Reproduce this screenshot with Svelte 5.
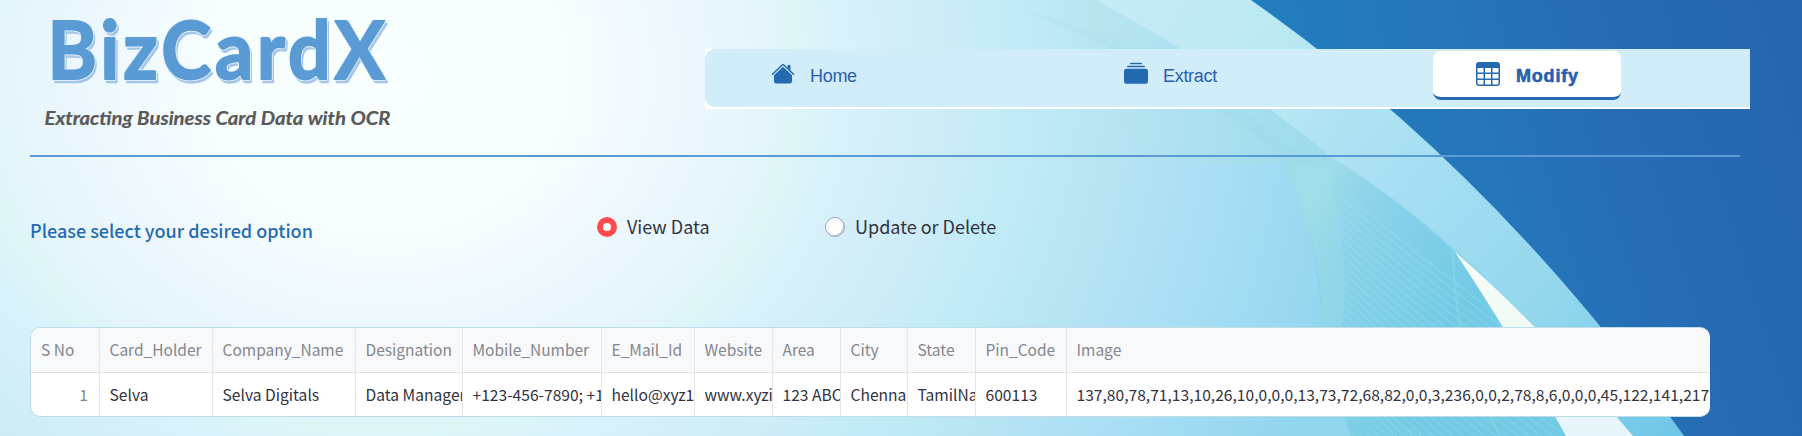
<script>
  const columns = [
    { name: 'S No', value: '1', width: 69, index: true },
    { name: 'Card_Holder', value: 'Selva', width: 113 },
    { name: 'Company_Name', value: 'Selva Digitals', width: 143 },
    { name: 'Designation', value: 'Data Manager', width: 107 },
    { name: 'Mobile_Number', value: '+123-456-7890; +1', width: 139 },
    { name: 'E_Mail_Id', value: 'hello@xyz1', width: 93 },
    { name: 'Website', value: 'www.xyzi', width: 78 },
    { name: 'Area', value: '123 ABC', width: 68 },
    { name: 'City', value: 'Chennai', width: 67 },
    { name: 'State', value: 'TamilNa', width: 68 },
    { name: 'Pin_Code', value: '600113', width: 91 },
    { name: 'Image', value: '137,80,78,71,13,10,26,10,0,0,0,13,73,72,68,82,0,0,3,236,0,0,2,78,8,6,0,0,0,45,122,141,217', width: 642 }
  ];
  const template = columns.map((c) => c.width + 'px').join(' ');
  const strands = Array.from({ length: 40 }, (_, i) => i);
  const fan = Array.from({ length: 16 }, (_, i) => i);
</script>

<div class="page">
  <svg class="backdrop" width="1802" height="436" viewBox="0 0 1802 436" aria-hidden="true">
    <defs>
      <radialGradient id="glow" gradientUnits="userSpaceOnUse" cx="0" cy="0" r="1000" gradientTransform="translate(385 75) scale(1 .86)">
        <stop offset="0" stop-color="#f8fffe" />
        <stop offset=".15" stop-color="#f7fffe" />
        <stop offset=".25" stop-color="#f1faff" />
        <stop offset=".35" stop-color="#e7f6fc" />
        <stop offset=".39" stop-color="#e3f5f9" />
        <stop offset=".42" stop-color="#dcf5f6" />
        <stop offset=".45" stop-color="#d9f1fb" />
        <stop offset=".57" stop-color="#ccecf7" />
        <stop offset=".64" stop-color="#c0ebf7" />
        <stop offset=".72" stop-color="#b7e5f1" />
        <stop offset=".78" stop-color="#b1e1f5" />
        <stop offset=".87" stop-color="#a4ddf2" />
        <stop offset=".96" stop-color="#98d7f0" />
        <stop offset="1" stop-color="#91d5ef" />
      </radialGradient>
      <linearGradient id="deep" gradientUnits="userSpaceOnUse" x1="1340" y1="200" x2="1790" y2="60">
        <stop offset="0" stop-color="#227dbd" />
        <stop offset=".35" stop-color="#2575b9" />
        <stop offset=".6" stop-color="#276cb4" />
        <stop offset="1" stop-color="#2566af" />
      </linearGradient>
      <linearGradient id="ribbon" gradientUnits="userSpaceOnUse" x1="1120" y1="0" x2="1660" y2="436">
        <stop offset="0" stop-color="#c6e9f6" />
        <stop offset=".2" stop-color="#bbe9f2" />
        <stop offset=".5" stop-color="#a5def3" />
        <stop offset=".75" stop-color="#94d7ed" />
        <stop offset="1" stop-color="#70c8e8" />
      </linearGradient>
      <linearGradient id="veil" x1="0" y1="0" x2="1" y2="0">
        <stop offset="0" stop-color="#b2e5e6" stop-opacity="0" />
        <stop offset=".4" stop-color="#b2e5e6" stop-opacity=".55" />
        <stop offset="1" stop-color="#9fdde4" stop-opacity=".8" />
      </linearGradient>
      <linearGradient id="mesh" gradientUnits="userSpaceOnUse" x1="1290" y1="230" x2="1450" y2="330">
        <stop offset="0" stop-color="#9edde8" />
        <stop offset=".3" stop-color="#8cd2eb" />
        <stop offset="1" stop-color="#73cae5" />
      </linearGradient>
      <linearGradient id="shard" x1="0" y1="0" x2="0" y2="1">
        <stop offset="0" stop-color="#f8fff8" />
        <stop offset=".5" stop-color="#f1f9f5" />
        <stop offset="1" stop-color="#e5f5fa" />
      </linearGradient>
      <clipPath id="meshClip"><path d="M1284 158 L1340 162 Q1405 205 1455 252 Q1495 312 1566 436 L1351 436 Q1328 380 1322 325 Q1316 240 1284 158Z" /></clipPath>
    </defs>
    <rect width="1802" height="436" fill="url(#glow)" />
    <path d="M1010 0 H1100 Q1220 65 1340 163 H1284 Q1200 170 1140 150 Q1080 60 1010 0Z" fill="url(#veil)" opacity=".5" />
    <path d="M1095 0 H1250 Q1497 172 1684 436 H1632 Q1482 250 1335 160 Q1220 65 1095 0Z" fill="url(#ribbon)" />
    <path d="M1284 158 L1340 162 Q1405 205 1455 252 Q1495 312 1566 436 L1351 436 Q1328 380 1322 325 Q1316 240 1284 158Z" fill="url(#mesh)" />
    <g clip-path="url(#meshClip)" fill="none" stroke="#aae5ee" stroke-width="1" opacity=".42">
      {#each strands as i}
        <path d="M{1270 + i * 1.2} {120 + i * 9} Q{1350 + i} {210 + i * 9} 1560 {360 + i * 9}" />
      {/each}
      {#each fan as i}
        <path d="M{1286 + i * 2.5} 155 Q{1322 + i * 2} {230 + i * 2} {1323 + i * 1.2} 325 T{1354 + i * 5} 440" stroke="#a9e7e1" stroke-width=".8" />
      {/each}
      <path d="M1453 252 Q1454 350 1500 436" stroke="#a9e7e1" stroke-width="2" opacity=".6" />
    </g>
    <g fill="none" stroke="#8fd3df" stroke-width=".7" opacity=".2">
      {#each fan as i}
        <path d="M{1020 + i * 12} {10 + i * 3} Q{1190 + i * 4} {70 + i * 4} {1288 + i * 2} 164" />
      {/each}
    </g>
    <path d="M1455 252 Q1540 325 1633 436 H1566 Q1515 342 1455 252Z" fill="url(#shard)" />
    <path d="M1251 0 H1802 V436 H1684 Q1496 172 1251 0Z" fill="url(#deep)" />
  </svg>

  <header>
    <div class="brand">
      <svg width="400" height="140" viewBox="0 0 400 140" role="img" aria-label="BizCardX">
        <g class="title" transform="scale(.94 1)">
          <text class="shade" x="52.5" y="82" textLength="359" lengthAdjust="spacing">BizCardX</text>
          <text class="rim" x="50.500" y="79.5" textLength="359" lengthAdjust="spacing">BizCardX</text>
          <text class="face" x="50.500" y="79.5" textLength="359" lengthAdjust="spacing">BizCardX</text>
        </g>
        <text class="tagline" x="44.5" y="124.500" textLength="346" lengthAdjust="spacingAndGlyphs">Extracting Business Card Data with OCR</text>
      </svg>
    </div>
    <nav>
      <div class="tabs">
        <a class="tab">
          <svg width="24" height="23" viewBox="0 0 16 16" preserveAspectRatio="none"><path d="m8 3.293 6 6V13.500a1.500 1.500 0 0 1-1.500 1.500h-9A1.500 1.500 0 0 1 2 13.500V9.293l6-6zm5-.793V6l-2-2V2.500a.5.5 0 0 1 .5-.5h1a.5.5 0 0 1 .5.500z" /><path d="M7.293 1.500a1 1 0 0 1 1.414 0l6.647 6.646a.5.5 0 0 1-.708.708L8 2.207 1.354 8.854a.5.5 0 1 1-.708-.708L7.293 1.500z" /></svg>
          <span>Home</span>
        </a>
        <a class="tab">
          <svg width="24" height="24" viewBox="0 0 16 16"><path d="M0 13a1.500 1.500 0 0 0 1.500 1.500h13A1.500 1.500 0 0 0 16 13V6a1.500 1.500 0 0 0-1.500-1.500h-13A1.500 1.500 0 0 0 0 6v7zM2 3a.5.5 0 0 0 .5.5h11a.5.5 0 0 0 0-1h-11A.5.5 0 0 0 2 3zm2-2a.5.5 0 0 0 .5.5h7a.5.5 0 0 0 0-1h-7A.5.5 0 0 0 4 1z" /></svg>
          <span>Extract</span>
        </a>
        <a class="tab active">
          <svg width="24" height="24" viewBox="0 0 16 16"><path d="M0 2a2 2 0 0 1 2-2h12a2 2 0 0 1 2 2v12a2 2 0 0 1-2 2H2a2 2 0 0 1-2-2V2zm15 2h-4v3h4V4zm0 4h-4v3h4V8zm0 4h-4v3h3a1 1 0 0 0 1-1v-2zm-5 3v-3H6v3h4zm-5 0v-3H1v2a1 1 0 0 0 1 1h3zm-4-4h4V8H1v3zm0-4h4V4H1v3zm5-3v3h4V4H6zm4 4H6v3h4V8z" /></svg>
          <span>Modify</span>
        </a>
      </div>
    </nav>
  </header>

  <hr />

  <section class="choices">
    <h2>Please select your desired option</h2>
    <div class="radio"><i class="dot on"></i><span>View Data</span></div>
    <div class="radio"><i class="dot"></i><span>Update or Delete</span></div>
  </section>

  <div class="grid">
    <div class="row head" style="grid-template-columns: {template}">
      {#each columns as c}<div class="cell">{c.name}</div>{/each}
    </div>
    <div class="row" style="grid-template-columns: {template}">
      {#each columns as c}<div class="cell" class:index={c.index}>{c.value}</div>{/each}
    </div>
  </div>
</div>

<style>
  .page {
    position: relative;
    isolation: isolate;
    width: 1802px;
    height: 436px;
    overflow: hidden;
    font-family: "Noto Sans CJK SC", "Open Sans", sans-serif;
    color: #31333f;
  }
  .backdrop { position: absolute; inset: 0; z-index: -1; }
  header { display: flex; height: 155px; }
  .brand { width: 705px; }
  .brand svg { display: block; }
  .title { font: 700 80px Lato, sans-serif; stroke-linejoin: round; }
  .shade { fill: #a3c6ea; stroke: #a3c6ea; stroke-width: 2.5; }
  .rim { fill: #eef7fd; stroke: #eef7fd; stroke-width: 3.6; }
  .face { fill: #5b9bd5; stroke: #5b9bd5; stroke-width: 2; }
  .tagline { font: italic 700 18.500px Lato, sans-serif; fill: #595959; stroke: #595959; stroke-width: .2; }
  nav { width: 1045px; height: 60px; margin-top: 49px; background: #fff; }
  .tabs {
    display: grid;
    grid-template-columns: 353px 353px 339px;
    height: 58px;
    box-sizing: border-box;
    padding-top: 2px;
    background: #d1edf9;
    border-radius: 10px 0 0 10px;
  }
  .tab {
    display: flex;
    align-items: flex-start;
    box-sizing: border-box;
    height: 49px;
    padding: 11px 0 0 66px;
    font: 18px/24px "Liberation Sans", Arial, sans-serif;
    color: #2a5fae;
  }
  .tab svg { fill: #246ab1; margin-right: 16px; flex: none; }
  .tab:first-child { letter-spacing: -.3px; }
  .tab:first-child svg { margin-right: 15px; }
  .tab span { padding-top: 2px; }
  .tab:nth-child(2) { letter-spacing: -.3px; }
  .tab:nth-child(2) svg { margin-right: 15px; }
  .tab.active {
    width: 188px;
    margin-left: 22px;
    padding-left: 43px;
    background: #fff;
    border-bottom: 3px solid #246ab1;
    border-radius: 8px;
    font-weight: 700;
    letter-spacing: .8px;
    -webkit-text-stroke: .6px #2a5fae;
  }
  hr { width: 1710px; height: 2px; margin: 0 0 0 30px; border: 0; background: #5b9bd5; }
  .choices { display: flex; height: 170px; margin-left: 30px; align-items: flex-start; }
  h2 { width: 567px; margin: 58px 0 0; font-size: 18px; line-height: 30px; font-weight: 500; color: #266ab2; }
  .radio { display: flex; align-items: center; gap: 10px; width: 228px; height: 30px; margin-top: 55px; font-size: 18px; }
  .radio span { margin-top: -2px; }
  .dot { box-sizing: border-box; width: 20px; height: 20px; border-radius: 50%; background: #fff; border: 1px solid #98a3b3; box-shadow: inset -1px -1px 0 #c2c9d2; flex: none; }
  .dot.on { border: 6px solid #ff4b4b; box-shadow: none; }
  .grid {
    box-sizing: border-box;
    width: 1680px;
    height: 90px;
    margin-left: 30px;
    overflow: hidden;
    border: 1px solid #bddde8;
    border-right-color: #fff;
    border-radius: 10px;
    background: #fff;
  }
  .row { display: grid; height: 44px; font-size: 15.620px; line-height: 42px; }
  .row.head { box-sizing: border-box; height: 45px; font-size: 15.500px; line-height: 43px; color: #84868e; background: #f8f9fb; border-bottom: 1px solid #e1e3e7; }
  .cell { box-sizing: border-box; padding-left: 9.500px; overflow: hidden; white-space: nowrap; border-right: 1px solid #e4e5e8; }
  .cell:first-child { padding-left: 10px; }
  .cell:last-child { border-right: 0; }
  .cell.index { color: #84868e; text-align: right; padding-right: 11px; }
</style>
